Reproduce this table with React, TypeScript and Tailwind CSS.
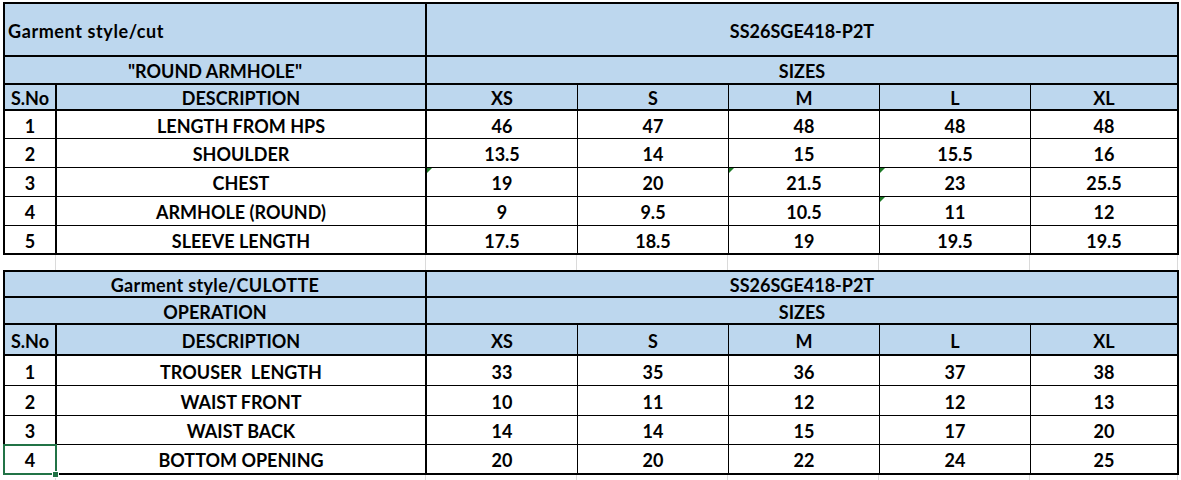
const sizes = ["XS", "S", "M", "L", "XL"];

type Row = { no: string; desc: string; vals: string[]; flags?: number[] };

const cutRows: Row[] = [
  { no: "1", desc: "LENGTH FROM HPS", vals: ["46", "47", "48", "48", "48"] },
  { no: "2", desc: "SHOULDER", vals: ["13.5", "14", "15", "15.5", "16"] },
  { no: "3", desc: "CHEST", vals: ["19", "20", "21.5", "23", "25.5"], flags: [0, 2, 3] },
  { no: "4", desc: "ARMHOLE (ROUND)", vals: ["9", "9.5", "10.5", "11", "12"], flags: [3] },
  { no: "5", desc: "SLEEVE LENGTH", vals: ["17.5", "18.5", "19", "19.5", "19.5"] },
];

const culotteRows: Row[] = [
  { no: "1", desc: "TROUSER  LENGTH", vals: ["33", "35", "36", "37", "38"] },
  { no: "2", desc: "WAIST FRONT", vals: ["10", "11", "12", "12", "13"] },
  { no: "3", desc: "WAIST BACK", vals: ["14", "14", "15", "17", "20"] },
  { no: "4", desc: "BOTTOM OPENING", vals: ["20", "20", "22", "24", "25"] },
];

const blue = "bg-[#bdd7ee]";

function Cols() {
  return (
    <colgroup>
      <col className="w-[52px]" />
      <col className="w-[370px]" />
      <col className="w-[151px]" />
      <col className="w-[151px]" />
      <col className="w-[151px]" />
      <col className="w-[151px]" />
      <col className="w-[148px]" />
    </colgroup>
  );
}

function Flag() {
  return <span className="absolute top-0 left-0 w-[5px] h-[5px] bg-[#1d7a26] [clip-path:polygon(0_0,100%_0,0_100%)]" />;
}

function SizeHeader() {
  return (
    <>
      {sizes.map((s, i) => (
        <td key={s} className={`${blue} pt-[2px] border-b-2 ${i === 4 ? "border-r-2" : "border-r"} border-black`}>
          {s}
        </td>
      ))}
    </>
  );
}

function DataRows({ rows, selectLast }: { rows: Row[]; selectLast?: boolean }) {
  return (
    <>
      {rows.map((r, ri) => {
        const last = ri === rows.length - 1;
        const bb = last ? "border-b-2" : "border-b";
        const h = selectLast ? (ri === 2 ? "h-[29px]" : "h-[30px]") : ri === 0 ? "h-[28px]" : "h-[29px]";
        return (
          <tr key={r.no} className={h}>
            <td className={`relative pt-[2px] border-r-2 ${bb} border-black`}>
              {r.no}
              {selectLast && last && (
                <span className="absolute z-10 -top-px -left-[2px] -right-[2px] -bottom-[2px] border-2 border-[#217346]">
                  <span className="absolute -right-[4px] -bottom-[5px] w-[7px] h-[7px] bg-[#217346] border border-white" />
                </span>
              )}
            </td>
            <td className={`pt-[2px] border-r-2 ${bb} border-black whitespace-pre`}>{r.desc}</td>
            {r.vals.map((v, i) => (
              <td key={i} className={`relative pt-[2px] ${i === 4 ? "border-r-2" : "border-r"} ${bb} border-black`}>
                {r.flags?.includes(i) && <Flag />}
                {v}
              </td>
            ))}
          </tr>
        );
      })}
    </>
  );
}

function Spacer({ h }: { h: string }) {
  const widths = ["w-[52px]", "w-[370px]", "w-[151px]", "w-[151px]", "w-[151px]", "w-[151px]", "w-[148px]"];
  return (
    <div className={`flex pl-[4px] ${h}`}>
      {widths.map((w, i) => (
        <div key={i} className={`${w} shrink-0 border-r border-[#dadada]`} />
      ))}
    </div>
  );
}

export default function App() {
  return (
    <div className="w-[1181px] h-[480px] overflow-hidden bg-white text-black font-bold text-[18px] leading-none font-['Lato','Carlito',sans-serif]">
      <div className="pt-[2px] pl-[3px]">
        <table className="table-fixed border-separate border-spacing-0 border-l-2 border-t-2 border-black text-center">
          <Cols />
          <tbody>
            <tr className="h-[53px]">
              <td colSpan={2} className={`${blue} pt-[2px] border-r-2 border-b-2 border-black text-left pl-[3px] tracking-[0.6px]`}>
                Garment style/cut
              </td>
              <td colSpan={5} className={`${blue} pt-[2px] border-r-2 border-b-2 border-black`}>
                SS26SGE418-P2T
              </td>
            </tr>
            <tr className="h-[28px]">
              <td colSpan={2} className={`${blue} pt-[2px] border-r-2 border-b-2 border-black`}>
                "ROUND ARMHOLE"
              </td>
              <td colSpan={5} className={`${blue} pt-[2px] border-r-2 border-b-2 border-black`}>
                SIZES
              </td>
            </tr>
            <tr className="h-[26px]">
              <td className={`${blue} pt-[2px] border-r-2 border-b-2 border-black`}>S.No</td>
              <td className={`${blue} pt-[2px] border-r-2 border-b-2 border-black`}>DESCRIPTION</td>
              <SizeHeader />
            </tr>
            <DataRows rows={cutRows} />
          </tbody>
        </table>
      </div>
      <Spacer h="h-[15px]" />
      <div className="pl-[3px]">
        <table className="table-fixed border-separate border-spacing-0 border-l-2 border-t-2 border-black text-center">
          <Cols />
          <tbody>
            <tr className="h-[26px]">
              <td colSpan={2} className={`${blue} pt-[2px] border-r-2 border-b-2 border-black tracking-[0.35px]`}>
                Garment style/CULOTTE
              </td>
              <td colSpan={5} className={`${blue} pt-[2px] border-r-2 border-b-2 border-black`}>
                SS26SGE418-P2T
              </td>
            </tr>
            <tr className="h-[27px]">
              <td colSpan={2} className={`${blue} pt-[2px] border-r-2 border-b-2 border-black`}>
                OPERATION
              </td>
              <td colSpan={5} className={`${blue} pt-[2px] border-r-2 border-b-2 border-black`}>
                SIZES
              </td>
            </tr>
            <tr className="h-[31px]">
              <td className={`${blue} pt-[2px] border-r-2 border-b-2 border-black`}>S.No</td>
              <td className={`${blue} pt-[2px] border-r-2 border-b-2 border-black`}>DESCRIPTION</td>
              <SizeHeader />
            </tr>
            <DataRows rows={culotteRows} selectLast />
          </tbody>
        </table>
      </div>
      <Spacer h="h-[6px]" />
    </div>
  );
}
